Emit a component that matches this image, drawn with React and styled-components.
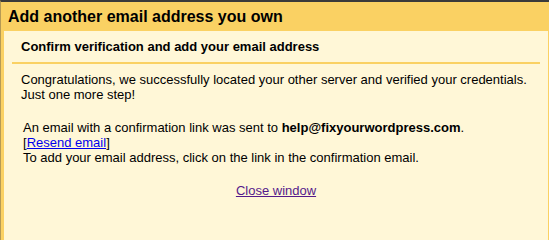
import React from "react";
import styled, { createGlobalStyle } from "styled-components";

const Global = createGlobalStyle`
  html, body { margin: 0; padding: 0; background: #fff7d7; }
  body { font-family: Arial, "Liberation Sans", sans-serif; }
`;

const Window = styled.div`
  min-height: 100vh;
  box-sizing: border-box;
  background: #fad163;
  border-top: 2px solid #3a3a3a;
  border-left: 1px solid #b59a55;
  padding: 0 1px 0 3px;
  display: flex;
  flex-direction: column;
`;

const Header = styled.div`
  height: 29px;
  box-sizing: border-box;
  padding: 6px 0 0 4px;
  margin-left: -3px;
  padding-left: 7px;
`;

const Title = styled.h1`
  margin: 0;
  font-size: 16px;
  line-height: 18px;
  font-weight: bold;
  color: #000;
`;

const Panel = styled.div`
  flex: 1;
  background: #fff7d7;
  padding: 8px 8px 0 8px;
  color: #000;
  font-size: 13px;
  line-height: 15px;
`;

const Subtitle = styled.h2`
  margin: 0;
  padding: 0 9px 8px 9px;
  font-size: 13px;
  line-height: 15px;
  font-weight: bold;
  border-bottom: 2px solid #fad163;
`;

const Para = styled.p`
  margin: ${(p) => p.$top}px 0 0 0;
  padding-left: ${(p) => p.$indent}px;
`;

const Strong = styled.b`
  font-weight: bold;
`;

const Link = styled.a`
  color: ${(p) => (p.$visited ? "#551a8b" : "#0000ee")};
  text-decoration: underline;
  cursor: pointer;
`;

const Footer = styled.div`
  margin-top: 18px;
  text-align: center;
`;

export default function App() {
  return (
    <>
      <Global />
      <Window>
        <Header>
          <Title>Add another email address you own</Title>
        </Header>
        <Panel>
          <Subtitle>Confirm verification and add your email address</Subtitle>
          <Para $top={8} $indent={9}>
            Congratulations, we successfully located your other server and verified your credentials.
            <br />
            Just one more step!
          </Para>
          <Para $top={18} $indent={11}>
            An email with a confirmation link was sent to <Strong>help@fixyourwordpress.com</Strong>.
            <br />
            [<Link>Resend email</Link>]
            <br />
            To add your email address, click on the link in the confirmation email.
          </Para>
          <Footer>
            <Link $visited>Close window</Link>
          </Footer>
        </Panel>
      </Window>
    </>
  );
}
